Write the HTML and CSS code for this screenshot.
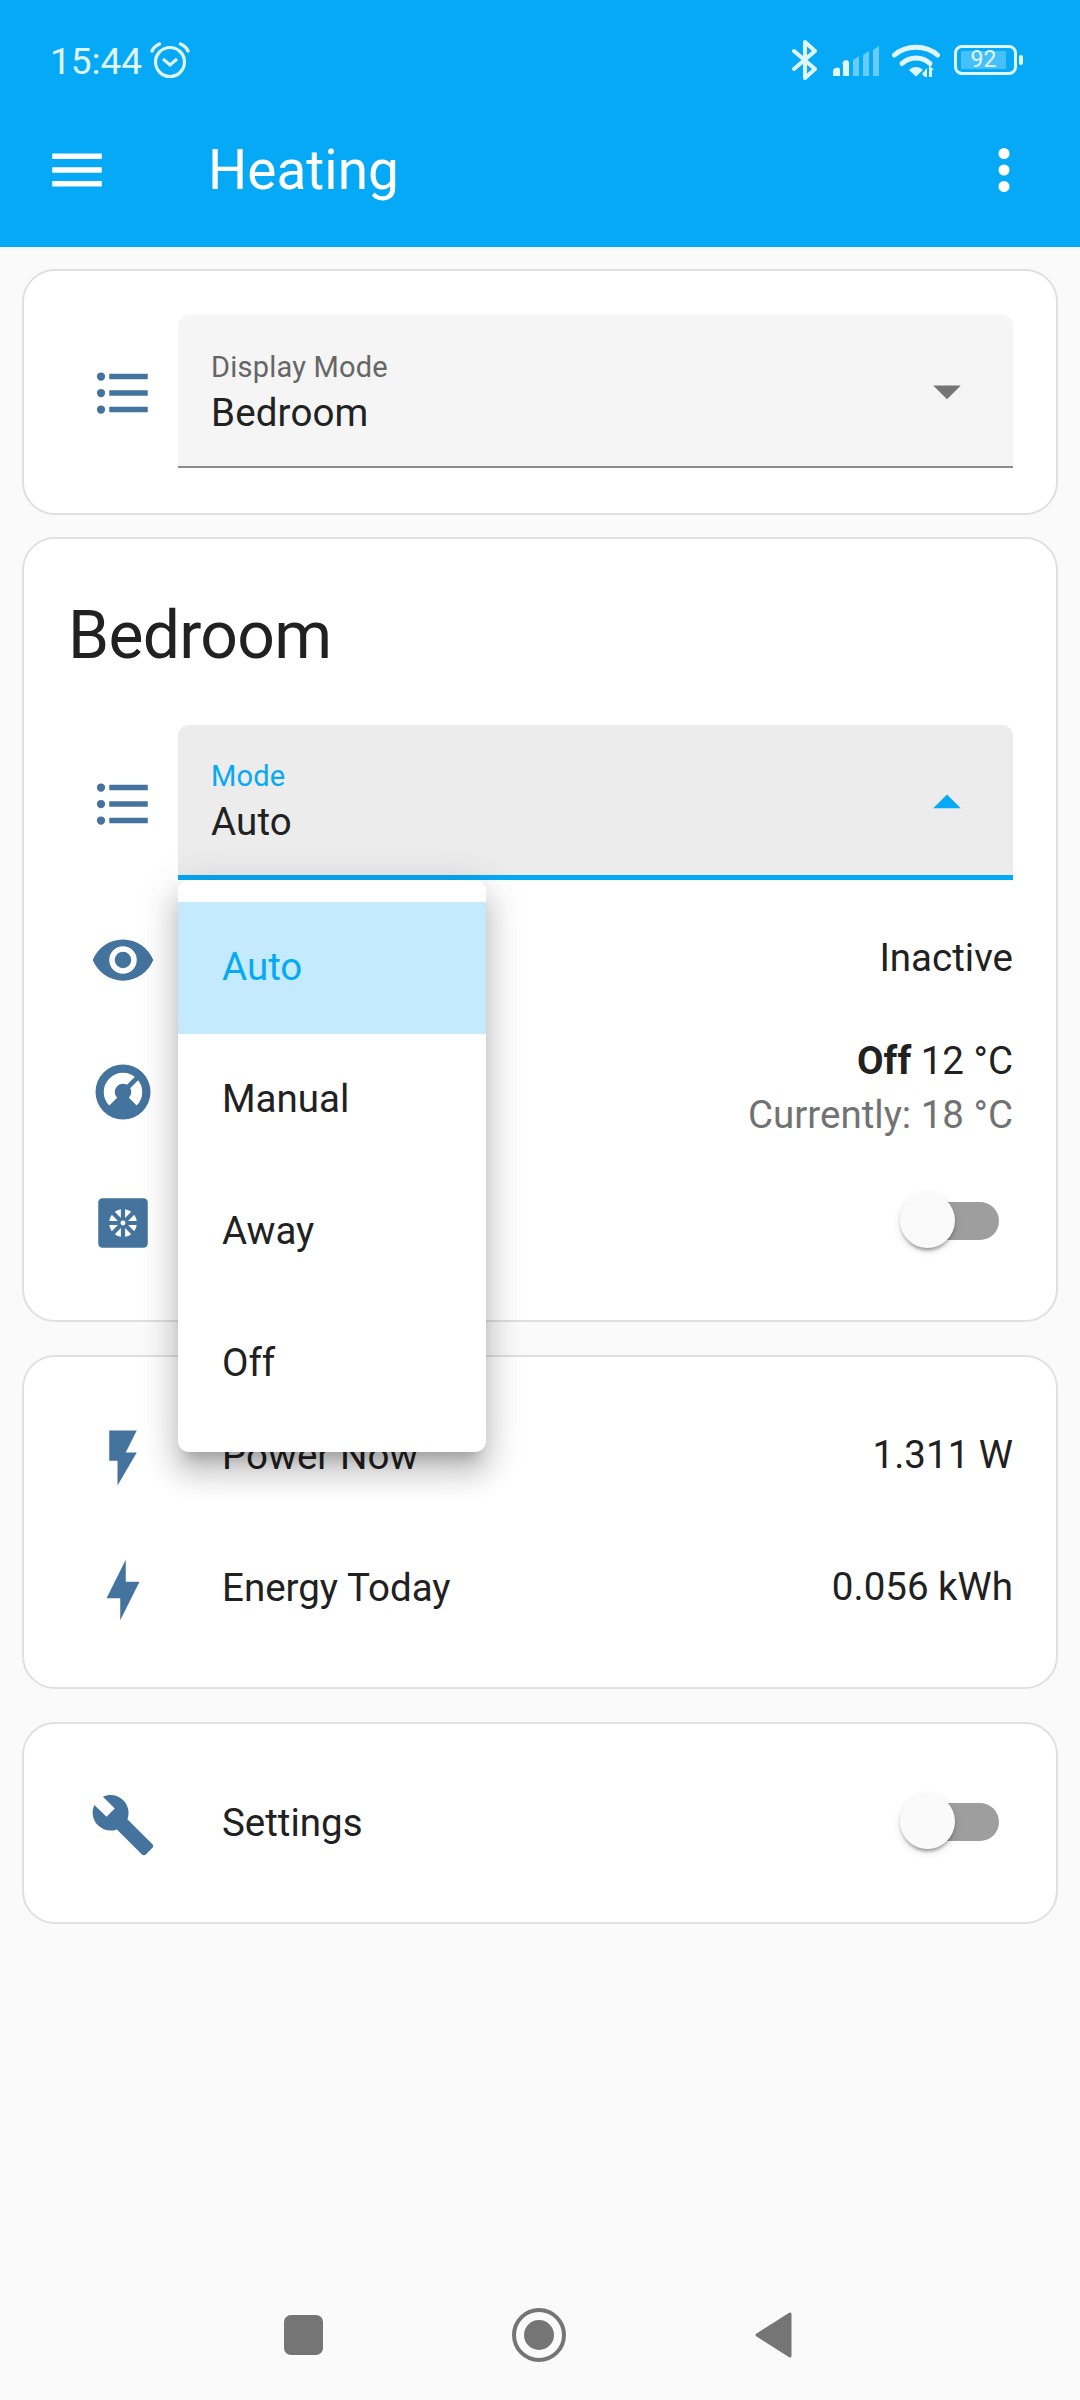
FILE: index.html
```html
<!DOCTYPE html>
<html lang="en">
<head>
<meta charset="UTF-8">
<meta name="viewport" content="width=device-width, initial-scale=1.0">
<title>Heating</title>
<link rel="stylesheet" href="styles.css">
</head>
<body>
    <div class="page">
        <header class="header">
            <div class="statusbar">
                <span class="time">15:44</span>
                <svg class="alarm" viewBox="0 0 40 40" width="40" height="40">
                    <circle cx="20" cy="22" r="14.5" fill="none" stroke="currentColor" stroke-width="3.200"/>
                    <path d="M13 22l7 6 7-6" transform="translate(0 -3)" fill="none" stroke="currentColor" stroke-width="3"/>
                    <path d="M2 11C3.500 7.500 6 5.500 9.500 4M38 11C36.500 7.500 34 5.500 30.500 4" fill="none" stroke="currentColor" stroke-width="3.200" stroke-linecap="round"/>
                </svg>
                <div class="status-right">
                    <svg class="st-bt" viewBox="0 0 26 40" width="26" height="40">
                        <path d="M2 11L23 29L13 38V2L23 11L2 29" fill="none" stroke="currentColor" stroke-width="4" stroke-linecap="round" stroke-linejoin="round"/>
                    </svg>
                    <svg class="st-signal" viewBox="0 0 48 32" width="48" height="32">
                        <path d="M1 31v-4a4 4 0 0 1 7-3v7z" fill="currentColor"/>
                        <path d="M11 31V20a3 3 0 0 1 6-3v14z" fill="currentColor"/>
                        <path d="M21 31V15l6-4v20z" fill="currentColor" opacity=".45"/>
                        <path d="M31 31V10l6-4v25z" fill="currentColor" opacity=".45"/>
                        <path d="M41 31V5l6-4v30z" fill="currentColor" opacity=".45"/>
                    </svg>
                    <svg class="st-wifi" viewBox="0 0 48 36" width="48" height="36">
                        <path d="M2.500 13C14 2.500 34 2.500 45.500 13" fill="none" stroke="currentColor" stroke-width="5" stroke-linecap="round"/>
                        <path d="M10 21.500C18 14 30 14 38 21.500" fill="none" stroke="currentColor" stroke-width="5" stroke-linecap="round"/>
                        <path d="M17 28C21 24 27 24 31 28L24 34.500z" fill="currentColor"/>
                        <path d="M35 26v9h-2l-3-3zM37 35v-12l5 5h-2v7z" fill="currentColor"/>
                    </svg>
                    <div class="battery">
                        <div class="battery-body"><span class="battery-fill">92</span></div>
                        <div class="battery-nub"></div>
                    </div>
                </div>
            </div>
            <div class="toolbar">
                <svg class="icon tb-menu" viewBox="0 0 24 24"><path d="M3,6H21V8H3V6M3,11H21V13H3V11M3,16H21V18H3V16Z"/></svg>
                <div class="title">Heating</div>
                <svg class="icon tb-more" viewBox="0 0 24 24"><path d="M12,16A2,2 0 0,1 14,18A2,2 0 0,1 12,20A2,2 0 0,1 10,18A2,2 0 0,1 12,16M12,10A2,2 0 0,1 14,12A2,2 0 0,1 12,14A2,2 0 0,1 10,12A2,2 0 0,1 12,10M12,4A2,2 0 0,1 14,6A2,2 0 0,1 12,8A2,2 0 0,1 10,6A2,2 0 0,1 12,4Z"/></svg>
            </div>
        </header>

        <main class="content">
            <section class="card card-display">
                <div class="row row-field">
                    <svg class="icon state-icon" viewBox="0 0 24 24"><path d="M7,5H21V7H7V5M7,13V11H21V13H7M4,4.500A1.500,1.500 0 0,1 5.500,6A1.500,1.500 0 0,1 4,7.500A1.500,1.500 0 0,1 2.500,6A1.500,1.500 0 0,1 4,4.500M4,10.500A1.500,1.500 0 0,1 5.500,12A1.500,1.500 0 0,1 4,13.500A1.500,1.500 0 0,1 2.500,12A1.500,1.500 0 0,1 4,10.500M7,19V17H21V19H7M4,16.500A1.500,1.500 0 0,1 5.500,18A1.500,1.500 0 0,1 4,19.500A1.500,1.500 0 0,1 2.500,18A1.500,1.500 0 0,1 4,16.500Z"/></svg>
                    <div class="field">
                        <div class="field-text">
                            <div class="field-label">Display Mode</div>
                            <div class="field-value">Bedroom</div>
                        </div>
                        <svg class="icon arrow" viewBox="0 0 24 24"><path d="M7 10l5 5 5-5z"/></svg>
                    </div>
                </div>
            </section>

            <section class="card card-bedroom">
                <h1 class="card-title">Bedroom</h1>
                <div class="row row-field">
                    <svg class="icon state-icon" viewBox="0 0 24 24"><path d="M7,5H21V7H7V5M7,13V11H21V13H7M4,4.500A1.500,1.500 0 0,1 5.500,6A1.500,1.500 0 0,1 4,7.500A1.500,1.500 0 0,1 2.500,6A1.500,1.500 0 0,1 4,4.500M4,10.500A1.500,1.500 0 0,1 5.500,12A1.500,1.500 0 0,1 4,13.500A1.500,1.500 0 0,1 2.500,12A1.500,1.500 0 0,1 4,10.500M7,19V17H21V19H7M4,16.500A1.500,1.500 0 0,1 5.500,18A1.500,1.500 0 0,1 4,19.500A1.500,1.500 0 0,1 2.500,18A1.500,1.500 0 0,1 4,16.500Z"/></svg>
                    <div class="field field-open">
                        <div class="field-text">
                            <div class="field-label">Mode</div>
                            <div class="field-value">Auto</div>
                        </div>
                        <svg class="icon arrow" viewBox="0 0 24 24"><path d="M7 15l5-5 5 5z"/></svg>
                    </div>
                    <ul class="menu">
                        <li class="menu-item selected">Auto</li>
                        <li class="menu-item">Manual</li>
                        <li class="menu-item">Away</li>
                        <li class="menu-item">Off</li>
                    </ul>
                </div>
                <div class="row row-status">
                    <svg class="icon state-icon" viewBox="0 0 24 24"><path d="M12,9A3,3 0 0,0 9,12A3,3 0 0,0 12,15A3,3 0 0,0 15,12A3,3 0 0,0 12,9M12,17A5,5 0 0,1 7,12A5,5 0 0,1 12,7A5,5 0 0,1 17,12A5,5 0 0,1 12,17M12,4.500C7,4.500 2.730,7.610 1,12C2.730,16.390 7,19.500 12,19.500C17,19.500 21.270,16.390 23,12C21.270,7.610 17,4.500 12,4.500Z"/></svg>
                    <div class="row-value">Inactive</div>
                </div>
                <div class="row">
                    <svg class="state-icon thermostat" viewBox="0 0 24 24">
                        <circle cx="12" cy="12" r="10"/>
                        <path class="dial" d="M8.460 15.540A5 5 0 1 1 15.540 15.540"/>
                        <path class="needle" d="M12 12L18.800 5.200"/>
                    </svg>
                    <div class="row-value row-value-double">
                        <div><b>Off</b> 12 °C</div>
                        <div class="secondary">Currently: 18 °C</div>
                    </div>
                </div>
                <div class="row row-toggle">
                    <svg class="state-icon snow" viewBox="0 0 24 24">
                        <rect class="snow-box" x="3" y="3" width="18" height="18" rx="1.500"/>
                        <circle class="snow-part" cx="12" cy="12" r="0.900"/>
                        <path class="snow-part" d="M12 10L10.800 7.100A5 5 0 0 1 13.200 7.100Z" transform="rotate(22.500 12 12)"/>
                        <path class="snow-part" d="M12 10L10.800 7.100A5 5 0 0 1 13.200 7.100Z" transform="rotate(67.500 12 12)"/>
                        <path class="snow-part" d="M12 10L10.800 7.100A5 5 0 0 1 13.200 7.100Z" transform="rotate(112.500 12 12)"/>
                        <path class="snow-part" d="M12 10L10.800 7.100A5 5 0 0 1 13.200 7.100Z" transform="rotate(157.500 12 12)"/>
                        <path class="snow-part" d="M12 10L10.800 7.100A5 5 0 0 1 13.200 7.100Z" transform="rotate(202.500 12 12)"/>
                        <path class="snow-part" d="M12 10L10.800 7.100A5 5 0 0 1 13.200 7.100Z" transform="rotate(247.500 12 12)"/>
                        <path class="snow-part" d="M12 10L10.800 7.100A5 5 0 0 1 13.200 7.100Z" transform="rotate(292.500 12 12)"/>
                        <path class="snow-part" d="M12 10L10.800 7.100A5 5 0 0 1 13.200 7.100Z" transform="rotate(337.500 12 12)"/>
                    </svg>
                    <div class="toggle"><div class="toggle-thumb"></div></div>
                </div>
            </section>

            <section class="card card-power">
                <div class="row">
                    <svg class="icon state-icon" viewBox="0 0 24 24"><path d="M7,2V13H10V22L17,10H13L17,2H7Z"/></svg>
                    <div class="row-name">Power Now</div>
                    <div class="row-value">1.311 W</div>
                </div>
                <div class="row">
                    <svg class="icon state-icon" viewBox="0 0 24 24"><path d="M11 15H6L13 1V9H18L11 23V15Z"/></svg>
                    <div class="row-name">Energy Today</div>
                    <div class="row-value">0.056 kWh</div>
                </div>
            </section>

            <section class="card card-settings">
                <div class="row row-toggle">
                    <svg class="icon state-icon" viewBox="0 0 24 24"><path d="M22.700,19L13.600,9.900C14.500,7.600 14,4.900 12.100,3C10.100,1 7.100,0.600 4.700,1.700L9,6L6,9L1.600,4.700C0.400,7.100 0.900,10.100 2.900,12.100C4.800,14 7.500,14.500 9.800,13.600L18.900,22.700C19.300,23.100 19.900,23.100 20.300,22.700L22.600,20.400C23.100,20 23.100,19.300 22.700,19Z"/></svg>
                    <div class="row-name">Settings</div>
                    <div class="toggle"><div class="toggle-thumb"></div></div>
                </div>
            </section>
        </main>

        <nav class="navbar">
            <div class="nav-square"></div>
            <div class="nav-home"><div class="nav-home-dot"></div></div>
            <svg class="nav-back" viewBox="0 0 37 46" width="37" height="46"><path d="M35 2V44L2 23Z" fill="#757575" stroke="#757575" stroke-width="3" stroke-linejoin="round"/></svg>
        </nav>
    </div>
</body>
</html>
```

FILE: styles.css
```css
body {
    margin: 0;
    padding: 0;
    font-family: Roboto, "Noto Sans", sans-serif;
    color: #212121;
    background-color: #fafafa;
}

.page {
    display: flex;
    flex-direction: column;
    height: 2400px;
    overflow: hidden;
}

.icon {
    fill: currentColor;
}

/* header */

.header {
    height: 247px;
    flex: none;
    color: #fff;
    background-color: #05a9f5;
}

.statusbar {
    display: flex;
    align-items: center;
    height: 120px;
    padding: 0 57px 0 50px;
    color: #e0f6ff;
}

.time {
    font-size: 37px;
    line-height: 40px;
    margin-top: 3px;
}

.alarm {
    margin-left: 8px;
}

.status-right {
    display: flex;
    align-items: center;
    margin-left: auto;
}

.st-bt {
    margin-right: 14px;
}

.st-signal {
    margin-right: 12px;
    margin-top: 1px;
}

.st-wifi {
    margin-right: 14px;
}

.battery {
    display: flex;
    align-items: center;
}

.battery-body {
    box-sizing: border-box;
    width: 63px;
    height: 30px;
    padding: 3px 8px 3px 4px;
    border: 3px solid #e0f6ff;
    border-radius: 8px;
}

.battery-fill {
    display: block;
    height: 18px;
    line-height: 18px;
    font-size: 23px;
    text-align: center;
    background-color: rgba(217, 244, 255, 0.3);
}

.battery-nub {
    width: 4px;
    height: 10px;
    margin-left: 2px;
    border-radius: 2px;
    background-color: #e0f6ff;
}

.toolbar {
    display: flex;
    align-items: center;
    height: 100px;
    padding: 0 43px 0 44px;
    box-sizing: border-box;
}

.tb-menu {
    width: 66px;
    height: 66px;
}

.title {
    font-size: 55px;
    margin-left: 98px;
}

.tb-more {
    width: 66px;
    height: 66px;
    margin-left: auto;
}

/* cards */

.content {
    display: flex;
    flex-direction: column;
    padding: 22px 22px 0;
}

.card {
    box-sizing: border-box;
    border: 2px solid #e0e0e0;
    border-radius: 33px;
    background-color: #fff;
    padding: 0 43px 0 44px;
}

.card-display {
    height: 246px;
    padding-top: 44px;
    margin-bottom: 22px;
}

.card-bedroom {
    height: 785px;
    margin-bottom: 33px;
}

.card-power {
    height: 334px;
    padding-top: 32px;
    margin-bottom: 33px;
}

.card-settings {
    height: 202px;
    padding-top: 33px;
}

.card-title {
    margin: 0;
    padding-top: 53px;
    font-size: 66px;
    font-weight: 400;
    letter-spacing: -0.7px;
    line-height: 88px;
    height: 133px;
}

.row {
    display: flex;
    align-items: center;
    position: relative;
    min-height: 132px;
    font-size: 38.500px;
    padding-left: 22px;
}

.row-toggle {
    height: 130px;
    min-height: 130px;
}

.row-status {
    margin-top: 12px;
}

.state-icon {
    flex: none;
    width: 66px;
    height: 66px;
    margin-top: 3px;
    color: #44739e;
    fill: #44739e;
}

.card-power .state-icon,
.card-settings .state-icon {
    margin-top: 6px;
}

.row-name {
    margin-left: 66px;
}

.row-value {
    margin-left: auto;
    text-align: right;
    line-height: 54px;
}

.row-value-double {
    margin-top: -5px;
}

.secondary {
    color: #727272;
}

/* select fields */

.field {
    display: flex;
    align-items: center;
    box-sizing: border-box;
    flex: 1;
    height: 153px;
    margin-left: 22px;
    padding: 0 33px;
    border-bottom: 2px solid #8c8c8c;
    border-radius: 11px 11px 0 0;
    background-color: #f5f5f5;
}

.field-open {
    height: 155px;
    border-bottom: 5px solid #05a9f5;
    background-color: #ececec;
}

.field-text {
    flex: 1;
    padding-top: 3px;
}

.field-label {
    font-size: 29px;
    line-height: 41px;
    letter-spacing: 0.2px;
    color: #666;
}

.field-open .field-label {
    color: #05a9f5;
}

.field-value {
    font-size: 38.500px;
    line-height: 50px;
    letter-spacing: 0.15px;
}

.arrow {
    flex: none;
    width: 66px;
    height: 66px;
    color: #757575;
}

.field-open .arrow {
    color: #05a9f5;
}

/* open dropdown */

.menu {
    position: absolute;
    z-index: 5;
    left: 110px;
    top: 155px;
    width: 308px;
    margin: 0;
    padding: 22px 0;
    list-style: none;
    border-radius: 11px;
    background-color: #fff;
    box-shadow: 0 14px 14px -8px rgba(0, 0, 0, 0.2), 0 22px 28px 3px rgba(0, 0, 0, 0.14), 0 8px 38px 6px rgba(0, 0, 0, 0.12);
}

.menu-item {
    height: 132px;
    line-height: 130px;
    padding-left: 44px;
    font-size: 38.500px;
}

.menu-item.selected {
    color: #05a9f5;
    background-color: #c4eafd;
}

/* switch */

.toggle {
    position: relative;
    width: 88px;
    height: 38px;
    margin-left: auto;
    margin-right: 14px;
    border-radius: 19px;
    background-color: #9e9e9e;
}

.toggle-thumb {
    position: absolute;
    left: -11px;
    top: -9px;
    width: 55px;
    height: 55px;
    border-radius: 50%;
    background-color: #fafafa;
    box-shadow: 0 5px 3px -3px rgba(0, 0, 0, 0.2), 0 3px 3px 0 rgba(0, 0, 0, 0.14), 0 3px 8px 0 rgba(0, 0, 0, 0.12);
}

/* icons with parts */

.thermostat {
    fill: #44739e;
}

.dial {
    fill: none;
    stroke: #fff;
    stroke-width: 4;
}

.needle {
    fill: none;
    stroke: #44739e;
    stroke-width: 1.700;
}

.snow-box {
    fill: #44739e;
}

.snow-part {
    fill: #fff;
}

/* navigation bar */

.navbar {
    display: flex;
    align-items: center;
    flex: none;
    height: 130px;
    margin-top: auto;
    padding-left: 284px;
}

.nav-square {
    width: 39px;
    height: 40px;
    border-radius: 7px;
    background-color: #757575;
}

.nav-home {
    display: flex;
    align-items: center;
    justify-content: center;
    box-sizing: border-box;
    width: 54px;
    height: 54px;
    margin-left: 189px;
    border: 4px solid #757575;
    border-radius: 50%;
}

.nav-home-dot {
    width: 30px;
    height: 30px;
    border-radius: 50%;
    background-color: #757575;
}

.nav-back {
    margin-left: 189px;
}
```
